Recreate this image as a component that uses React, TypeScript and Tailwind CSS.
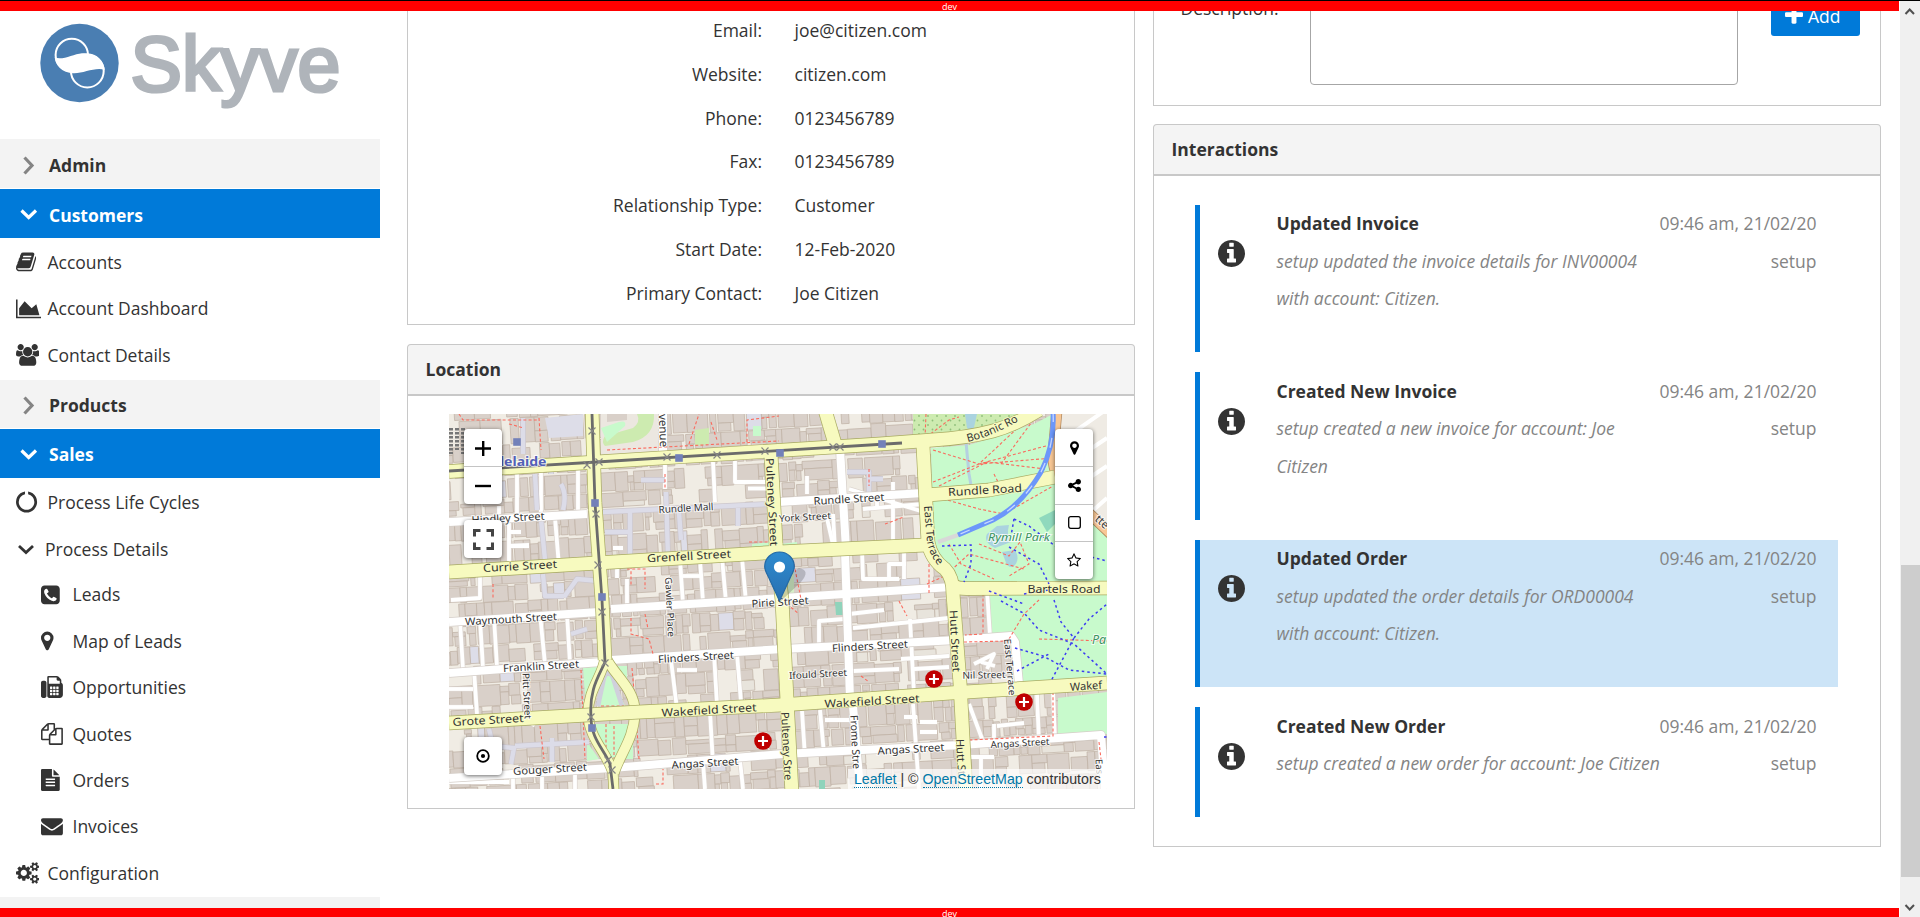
import React from "react";

type IconDef = { box: string; w: string; d: string };

const faxKeys = [928, 1184, 1440]
  .flatMap((x) =>
    [1536, 1280, 1024].map(
      (y) =>
        `M${x} ${y}v-128q0-14-9-23t-23-9h-128q-14 0-23 9t-9 23v128q0 14 9 23t23 9h128q14 0 23-9t9-23z`
    )
  )
  .join("");

const icons: Record<string, IconDef> = {
  book: {
    box: "64 0 1664 1792",
    w: "w-[20.3px]",
    d: "M1703 478q40 57 18 129l-275 906q-19 64-76.5 107.5t-122.5 43.5h-923q-77 0-148.5-53.5t-99.5-131.5q-24-67-2-127 0-4 3-27t4-37q1-8-3-21.5t-3-19.5q2-11 8-21t16.5-23.5 16.5-23.5q23-38 45-91.5t30-91.5q3-10 .5-30t-.5-28q3-11 17-28t17-23q21-36 42-92t25-90q1-9-2.5-32t.5-28q4-13 22-30.5t22-22.5q19-26 42.5-84.5t27.5-96.5q1-8-3-25.5t-2-26.5q2-8 9-18t18-23 17-21q8-12 16.5-30.5t15-35 16-36 19.5-32 26.5-23.5 36-11.5 47.5 5.5l-1 3q38-9 51-9h761q74 0 114 56t18 130l-274 906q-36 119-71.5 153.5t-128.5 34.5h-869q-27 0-38 15-11 16-1 43 24 70 144 70h923q29 0 56-15.5t35-41.5l300-987q7-22 5-57 38 15 59 43zm-1064 2q-4 13 2 22.5t20 9.5h608q13 0 25.5-9.5t16.5-22.5l21-64q4-13-2-22.5t-20-9.5h-608q-13 0-25.5 9.5t-16.5 22.5zm-83 256q-4 13 2 22.5t20 9.5h608q13 0 25.5-9.5t16.5-22.5l21-64q4-13-2-22.5t-20-9.5h-608q-13 0-25.5 9.5t-16.5 22.5z",
  },
  area: {
    box: "0 0 2048 1792",
    w: "w-[25px]",
    d: "M2048 1536v128h-2048v-1536h128v1408h1920zm-384-1024l256 896h-1664v-576l448-576 576 576z",
  },
  users: {
    box: "0 0 1920 1792",
    w: "w-[23.4px]",
    d: "M593 896q-162 5-265 128h-134q-82 0-138-40.5t-56-118.5q0-353 124-353 6 0 43.5 21t97.5 42.5 119 21.5q67 0 133-23-5 37-5 66 0 143 83 256zm1071 637q0 120-73 189.5t-194 69.5h-874q-121 0-194-69.5t-73-189.5q0-53 3.5-103.5t14-109 26.5-108.5 43-97.5 62-81 85.5-53.5 111.5-20q10 0 43 21.5t73 48 107 48 135 21.5 135-21.5 107-48 73-48 43-21.5q61 0 111.5 20t85.5 53.5 62 81 43 97.5 26.5 108.5 14 109 3.5 103.5zm-1024-1277q0 106-75 181t-181 75-181-75-75-181 75-181 181-75 181 75 75 181zm704 384q0 159-112.5 271.5t-271.5 112.5-271.5-112.5-112.5-271.5 112.5-271.5 271.5-112.5 271.5 112.5 112.5 271.5zm576 225q0 78-56 118.5t-138 40.5h-134q-103-123-265-128 83-113 83-256 0-29-5-66 66 23 133 23 59 0 119-21.5t97.5-42.5 43.5-21q124 0 124 353zm-128-609q0 106-75 181t-181 75-181-75-75-181 75-181 181-75 181 75 75 181z",
  },
  notch: {
    box: "32 0 1792 1792",
    w: "w-[21.9px]",
    d: "M1760 896q0 176-68.5 336t-184 275.5-275.5 184-336 68.5-336-68.5-275.5-184-184-275.5-68.5-336q0-213 97-398.5t265-305.5 374-151v228q-221 45-366.5 221t-145.5 406q0 130 51 248.5t136.5 204 204 136.5 248.5 51 248.5-51 204-136.5 136.5-204 51-248.5q0-230-145.5-406t-366.5-221v-228q206 31 374 151t265 305.5 97 398.5z",
  },
  phone: {
    box: "128 0 1536 1792",
    w: "w-[18.75px]",
    d: "M1408 1193q0-11-2-16t-18-16.5-40.5-25-47.5-26.5-45.5-25-28.5-15q-5-3-19-13t-25-15-21-5q-15 0-36.5 20.5t-39.5 45-38.5 45-33.5 20.5q-7 0-16.5-3.5t-15.5-6.5-17-9.5-14-8.5q-99-55-170-126.5t-127-170.5q-2-3-8.5-14t-9.5-17-6.5-15.5-3.5-16.5q0-13 20.5-33.5t45-38.5 45-39.5 20.5-36.5q0-10-5-21t-15-25-13-19q-3-6-15-28.5t-25-45.5-26.5-47.5-25-40.5-16.5-18-16-2q-48 0-101 22-46 21-80 94.5t-34 130.5q0 16 2.5 34t5 30.5 9 33 10 29.5 12.5 33 11 30q60 164 216.5 320.5t320.5 216.5q6 2 30 11t33 12.5 29.5 10 33 9 30.5 5 34 2.5q57 0 130.5-34t94.5-80q22-53 22-101zm256-777v960q0 119-84.5 203.5t-203.5 84.5h-960q-119 0-203.5-84.5t-84.5-203.5v-960q0-119 84.5-203.5t203.5-84.5h960q119 0 203.5 84.5t84.5 203.5z",
  },
  marker: {
    box: "384 0 1024 1792",
    w: "w-[12.5px]",
    d: "M1152 640q0-106-75-181t-181-75-181 75-75 181 75 181 181 75 181-75 75-181zm256 0q0 109-33 179l-364 774q-16 33-47.5 52t-67.5 19-67.5-19-46.5-52l-365-774q-33-70-33-179 0-212 150-362t362-150 362 150 150 362z",
  },
  fax: {
    box: "0 0 1792 1792",
    w: "w-[21.9px]",
    d:
      "M288 384q66 0 113 47t47 113v1088q0 66-47 113t-113 47h-128q-66 0-113-47t-47-113v-1088q0-66 47-113t113-47h128zm1376 163q58 34 93 93t35 128v768q0 106-75 181t-181 75h-864q-66 0-113-47t-47-113v-1536q0-40 28-68t68-28h672q40 0 88 20t76 48l152 152q28 28 48 76t20 88v163z" +
      faxKeys +
      "M1536 640v-256h-160q-40 0-68-28t-28-68v-160h-640v512z",
  },
  files: {
    box: "0 0 1792 1792",
    w: "w-[21.9px]",
    d: "M1696 384q40 0 68 28t28 68v1216q0 40-28 68t-68 28h-960q-40 0-68-28t-28-68v-288h-544q-40 0-68-28t-28-68v-672q0-40 20-88t48-76l408-408q28-28 76-48t88-20h416q40 0 68 28t28 68v328q68-40 128-40h416zm-544 213l-299 299h299v-299zm-640-384l-299 299h299v-299zm196 647l316-316v-416h-384v416q0 40-28 68t-68 28h-416v640h512v-256q0-40 20-88t48-76zm956 804v-1152h-384v416q0 40-28 68t-68 28h-416v640h896z",
  },
  file: {
    box: "128 0 1536 1792",
    w: "w-[18.75px]",
    d: "M1596 476q14 14 28 36h-472v-472q22 14 36 28zm-476 164h544v1056q0 40-28 68t-68 28h-1344q-40 0-68-28t-28-68v-1600q0-40 28-68t68-28h800v544q0 40 28 68t68 28zm160 736v-64q0-14-9-23t-23-9h-704q-14 0-23 9t-9 23v64q0 14 9 23t23 9h704q14 0 23-9t9-23zm0-256v-64q0-14-9-23t-23-9h-704q-14 0-23 9t-9 23v64q0 14 9 23t23 9h704q14 0 23-9t9-23zm0-256v-64q0-14-9-23t-23-9h-704q-14 0-23 9t-9 23v64q0 14 9 23t23 9h704q14 0 23-9t9-23z",
  },
  envelope: {
    box: "0 0 1792 1792",
    w: "w-[21.9px]",
    d: "M1792 710v794q0 66-47 113t-113 47h-1472q-66 0-113-47t-47-113v-794q44 49 101 87 362 246 497 345 57 42 92.5 65.5t94.5 48 110 24.5h2q51 0 110-24.5t94.5-48 92.5-65.5q170-123 498-345 57-39 100-87zm0-294q0 79-49 151t-122 123q-376 261-468 325-10 7-42.5 31t-54 38.5-52 32.5-57.5 27-50 9h-2q-23 0-50-9t-57.5-27-52-32.5-54-38.5-42.5-31q-91-64-262-182.5t-205-142.5q-62-42-117-115.5t-55-136.5q0-78 41.5-130t118.5-52h1472q65 0 112.5 47t47.5 113z",
  },
  cogs: {
    box: "0 0 1920 1792",
    w: "w-[23.4px]",
    d: "M896 896q0-106-75-181t-181-75-181 75-75 181 75 181 181 75 181-75 75-181zm768 512q0-52-38-90t-90-38-90 38-38 90q0 53 37.5 90.5t90.5 37.5 90.5-37.5 37.5-90.5zm0-1024q0-52-38-90t-90-38-90 38-38 90q0 53 37.5 90.5t90.5 37.5 90.5-37.5 37.5-90.5zm-384 421v185q0 10-7 19.5t-16 10.5l-155 24q-11 35-32 76 34 48 90 115 7 11 7 20 0 12-7 19-23 30-82.5 89.5t-78.5 59.5q-11 0-21-7l-115-90q-37 19-77 31-11 108-23 155-7 24-30 24h-186q-11 0-20-7.5t-10-17.5l-23-153q-34-10-75-31l-118 89q-7 7-20 7-11 0-21-8-144-133-144-160 0-9 7-19 10-14 41-53t47-61q-23-44-35-82l-152-24q-10-1-17-9.5t-7-19.5v-185q0-10 7-19.5t16-10.5l155-24q11-35 32-76-34-48-90-115-7-11-7-20 0-12 7-20 22-30 82-89t79-59q11 0 21 7l115 90q34-18 77-32 11-108 23-154 7-24 30-24h186q11 0 20 7.5t10 17.5l23 153q34 10 75 31l118-89q8-7 20-7 11 0 21 8 144 133 144 160 0 8-7 19-12 16-42 54t-45 60q23 48 34 82l152 23q10 2 17 10.5t7 19.5zm640 533v140q0 16-149 31-12 27-30 52 51 113 51 138 0 4-4 7-122 71-124 71-8 0-46-47t-52-68q-20 2-30 2t-30-2q-14 21-52 68t-46 47q-2 0-124-71-4-3-4-7 0-25 51-138-18-25-30-52-149-15-149-31v-140q0-16 149-31 13-29 30-52-51-113-51-138 0-4 4-7 4-2 35-20t59-34 30-16q8 0 46 46.5t52 67.5q20-2 30-2t30 2q51-71 92-112l6-2q4 0 124 70 4 3 4 7 0 25-51 138 17 23 30 52 149 15 149 31zm0-1024v140q0 16-149 31-12 27-30 52 51 113 51 138 0 4-4 7-122 71-124 71-8 0-46-47t-52-68q-20 2-30 2t-30-2q-14 21-52 68t-46 47q-2 0-124-71-4-3-4-7 0-25 51-138-18-25-30-52-149-15-149-31v-140q0-16 149-31 13-29 30-52-51-113-51-138 0-4 4-7 4-2 35-20t59-34 30-16q8 0 46 46.5t52 67.5q20-2 30-2t30 2q51-71 92-112l6-2q4 0 124 70 4 3 4 7 0 25-51 138 17 23 30 52 149 15 149 31z",
  },
  info: {
    box: "128 128 1536 1536",
    w: "w-[27px]",
    d: "M1152 1376v-160q0-14-9-23t-23-9h-96v-512q0-14-9-23t-23-9h-320q-14 0-23 9t-9 23v160q0 14 9 23t23 9h96v320h-96q-14 0-23 9t-9 23v160q0 14 9 23t23 9h448q14 0 23-9t9-23zm-128-896v-160q0-14-9-23t-23-9h-192q-14 0-23 9t-9 23v160q0 14 9 23t23 9h192q14 0 23-9t9-23zm640 416q0 209-103 385.5t-279.5 279.5-385.5 103-385.5-103-279.5-279.5-103-385.5 103-385.5 279.5-279.5 385.5-103 385.5 103 279.5 279.5 103 385.5z",
  },
  plus: {
    box: "192 0 1408 1792",
    w: "w-[18px]",
    d: "M1600 736v192q0 40-28 68t-68 28h-416v416q0 40-28 68t-68 28h-192q-40 0-68-28t-28-68v-416h-416q-40 0-68-28t-28-68v-192q0-40 28-68t68-28h416v-416q0-40 28-68t68-28h192q40 0 68 28t28 68v416h416q40 0 68 28t28 68z",
  },
  share: {
    box: "128 0 1536 1792",
    w: "w-[13px]",
    d: "M1344 1024q133 0 226.5 93.5t93.5 226.5-93.5 226.5-226.5 93.5-226.5-93.5-93.5-226.5q0-12 2-34l-360-180q-92 86-218 86-133 0-226.5-93.5t-93.5-226.5 93.5-226.5 226.5-93.5q126 0 218 86l360-180q-2-22-2-34 0-133 93.5-226.5t226.5-93.5 226.5 93.5 93.5 226.5-93.5 226.5-226.5 93.5q-126 0-218-86l-360 180q2 22 2 34t-2 34l360 180q92-86 218-86z",
  },
  star: {
    box: "64 0 1664 1792",
    w: "w-[14px]",
    d: "M1201 1004l306-297-422-62-189-382-189 382-422 62 306 297-73 421 378-199 377 199zm527-357q0 22-26 48l-363 354 86 500q1 7 1 20 0 50-41 50-19 0-40-12l-449-236-449 236q-22 12-40 12-21 0-31.5-14.5t-10.5-35.5q0-6 2-20l86-500-364-354q-25-27-25-48 0-37 56-46l502-73 225-455q19-41 49-41t49 41l225 455 502 73q56 9 56 46z",
  },
};

function Icon({ name, className = "" }: { name: string; className?: string }) {
  const i = icons[name];
  return (
    <svg viewBox={i.box} className={`${className || i.w} shrink-0`} fill="currentColor" fillRule="evenodd">
      <path d={i.d} />
    </svg>
  );
}

function Logo() {
  return (
    <svg width="380" height="128" viewBox="0 11 380 128" className="block shrink-0">
      <circle cx="79.5" cy="63" r="39.2" fill="#4a7eb2" />
      <circle cx="71.8" cy="55" r="16.2" fill="none" stroke="#fff" strokeWidth="2" />
      <circle cx="87.3" cy="71" r="16.4" fill="none" stroke="#fff" strokeWidth="2" />
      <path
        d="M54.7 57.3C62 61 73 54 82 53.2C95 52.5 104.5 60 104.7 70C95 66.500 82 74.500 72 73.200C62 72 55.500 66 54.700 57.300Z"
        fill="#fff"
      />
      <text
        x="130.500"
        y="91.200"
        fontFamily="Liberation Sans, sans-serif"
        fontSize="77"
        textLength="210"
        lengthAdjust="spacingAndGlyphs"
        fill="#afb4ba"
        stroke="#afb4ba"
        strokeWidth="3.2"
      >
        Skyve
      </text>
    </svg>
  );
}

function Section({ label, open = false, height = "h-[49px]" }: { label: string; open?: boolean; height?: string }) {
  return (
    <div
      className={`flex ${height} shrink-0 items-center overflow-hidden font-bold ${
        open ? "bg-[#007ad9] text-white" : "mb-px bg-[#f3f3f3] text-[#333333]"
      }`}
    >
      <svg width="49" height="49" viewBox="0 0 49 49" fill="none" strokeWidth="3.200">
        {open ? (
          <path d="M21.500 21.500L28.700 28.500L36 21.500" stroke="#fff" />
        ) : (
          <path d="M24.500 18.500L32 26.500L24.500 34.500" stroke="#848484" />
        )}
      </svg>
      <span className={open ? "pt-[2px]" : "pt-[3px]"}>{label}</span>
    </div>
  );
}

function Item({ icon, label, sub = false, tall = false }: { icon: string; label: string; sub?: boolean; tall?: boolean }) {
  return (
    <div
      className={`flex shrink-0 items-center ${tall ? "h-[46.67px]" : "h-[46.4px]"} ${sub ? "pb-[1px] pl-[41px]" : "pl-4"}`}
    >
      <span className="flex w-[31.5px]">
        <Icon name={icon} />
      </span>
      <span>{label}</span>
    </div>
  );
}

function Sidebar() {
  return (
    <nav className="flex w-[380px] shrink-0 flex-col overflow-hidden bg-white">
      <Logo />
      <Section label="Admin" />
      <Section label="Customers" open />
      <div className="flex shrink-0 flex-col pb-[1.500px] pt-[0.500px]">
        <Item tall icon="book" label="Accounts" />
        <Item tall icon="area" label="Account Dashboard" />
        <Item tall icon="users" label="Contact Details" />
      </div>
      <div className="flex shrink-0 flex-col">
        <Section label="Products" height="h-[48px]" />
        <Section label="Sales" open />
      </div>
      <div className="flex shrink-0 flex-col py-px">
        <Item icon="notch" label="Process Life Cycles" />
        <div className="flex h-[46.4px] shrink-0 items-center">
          <svg width="45" height="24" viewBox="0 0 45 24" fill="none" stroke="#333" strokeWidth="2.800">
            <path d="M19 9L26 15.500L33 9" />
          </svg>
          <span>Process Details</span>
        </div>
        <Item sub icon="phone" label="Leads" />
        <Item sub icon="marker" label="Map of Leads" />
        <Item sub icon="fax" label="Opportunities" />
        <Item sub icon="files" label="Quotes" />
        <Item sub icon="file" label="Orders" />
        <Item sub icon="envelope" label="Invoices" />
        <Item icon="cogs" label="Configuration" />
      </div>
      <div className="h-[20px] shrink-0 bg-[#f3f3f3]" />
    </nav>
  );
}

/* ---------- Map ---------- */

function seeded(seed: number) {
  let s = seed;
  return () => {
    s = (s * 1664525 + 1013904223) % 4294967296;
    return s / 4294967296;
  };
}

type Box = { x: number; y: number; w: number; h: number; f: string };

const buildings: Box[] = (() => {
  const r = seeded(77);
  const out: Box[] = [];
  for (let y = -10; y < 430; ) {
    const rowH = 15 + r() * 11;
    for (let x = -30; x < 690; ) {
      const w = 6 + r() * r() * 26;
      const roll = r();
      const top = r() < 0.3 ? r() * 5 : 0;
      if (roll > 0.1) {
        if (roll < 0.45) {
          const cut = rowH * (0.35 + r() * 0.3);
          out.push({ x, y: y + top, w, h: cut - top, f: "#d9d0c9" });
          out.push({ x: x + (r() < 0.4 ? 2 : 0), y: y + cut, w: w - r() * 3, h: rowH - cut - 1, f: r() < 0.1 ? "#e8e4dc" : "#d9d0c9" });
        } else {
          out.push({ x, y: y + top, w, h: rowH - top - r() * 2, f: r() < 0.04 ? "#dddde8" : "#d9d0c9" });
        }
      }
      x += w + (r() < 0.25 ? 2 : 0);
    }
    y += rowH + (r() < 0.3 ? 2 : 0.3);
  }
  return out;
})();

const lanes = [
  "M68 58V100", "M92 57V102", "M129 55V98", "M264 48L266 88", "M286 47V68H318", "M299 74.500H320", "M216 50V75",
  "M50 92V104", "M60 106V147M60 132H80M60 118H72", "M106 104L110 152", "M31 160V184L2 186", "M59 132L80 131",
  "M231 146L234 190", "M251 146L254 188", "M273 144L277 188", "M293 144L297 188", "M168 145V164M164 134H174", "M234 162H251",
  "M178 165V194", "M11 207L14 255", "M31 205L34 254", "M45 204L48 252", "M91 200L96 250", "M118 200L121 250",
  "M265 240L268 290", "M288 240L292 288", "M222 246L228 295", "M228 256H248", "M25 256L28 300", "M0 275H24", "M0 293H24",
  "M83 312L87 306", "M261 298L264 350", "M291 346L294 375", "M254 348L256 375", "M64 360V375", "M93 360V375", "M126 358V375",
  "M0 368H60", "M377 100L385 135", "M384 100L386 135", "M413 136L414 165H450M440 165V150H457M455 132V165",
  "M444 68V132M414 95L475 90M400 75L475 98M428 80V95", "M358 62V80", "M371 296L375 340M376 306H402", "M353 297L356 343",
  "M461 205L465 280", "M464 290L470 375", "M400 200L435 196M404 214L500 204", "M370 235V207L395 205", "M465 255L500 253",
  "M404 257L450 255M452 245L500 242", "M471 308H488M471 318H488M455 303H468", "M588 280L590 328M604 278L606 325", "M651 322L656 375",
  "M538 176L541 222L560 221", "M525 250L545 240L538 255M532 248L546 252", "M516 343H545M532 345V375", "M520 290L535 330M545 310V325M548 312L575 309",
];

const minorRoads = [
  "M0 108L138 100", "M330 88L474 79", "M0 208L150 198", "M162 195L334 184L502 173", "M0 259L153 248",
  "M162 246L334 235L508 226L562 222L566 228L570 270", "M0 364L163 354L334 340L512 331L652 321L656 375",
  "M214 0V44", "M391 35L397 135", "M396 138L401 285", "M404 292L411 375",
];

const lavender = [
  "M154 98L320 90", "M86 60L88 96", "M92 105L97 156", "M217 78L219 142", "M181 96V142M156 118H180", "M230 98L232 126",
  "M94 160L96 182H115M115 183L128 165L150 167", "M112 70Q118 80 114 96M102 50V60M74 4V40", "M192 66H216", "M289 94V112",
  "M398 58H420V78M420 65H434", "M40 315L44 332L65 334L62 350M66 332L140 328M103 324V348", "M122 220L138 215",
];

const primary = [
  "M0 57.500L148 48L431 30L484 26Q518 24 544 17Q566 11 590 -4",
  "M143 -4L146 89L153 186L156 246", "M376 -4L386 30",
  "M0 158L148 149L331 138L476 131", "M0 309L138 301L191 298L331 291L501 279L658 269",
  "M322 40L327 130L333 186L338 286L343 380",
  "M474 32L479 128Q482 145 496 155Q504 163 504 180L511 269L517 380",
  "M504 172Q510 175 520 174.500L658 174", "M478 81L540 76L606 63",
];

const squareRing = [
  "M156 244C154 262 139 275 139 300C140 325 158 338 164 359L165 380",
  "M157 244C166 262 186 275 186 298C185 325 172 338 165 359",
];

const redPaths = [
  "M10 0L14 6H90M60 10L75 14M90 4L92 36", "M158 36L330 27M240 30L250 0M262 8L268 26M298 28V6L330 2", "M216 60V75",
  "M477 0L476 24L500 6L510 3", "M484 36L530 50L604 30M484 68L530 50L575 8M490 72L538 48L596 55M530 50L604 44M545 60L552 74M552 50L585 5",
  "M484 82L530 95L555 100L604 72", "M498 160L520 140L575 155M530 130L560 142L571 128L580 150L560 162M500 130L512 150L545 165",
  "M300 128H322M302 136L318 142", "M178 155H196V175M182 152V172", "M182 204V220L200 225L204 240M196 200L199 215", "M183 254L187 300",
  "M132 256L136 345", "M152 292H175", "M188 316L190 345", "M91 312L95 345", "M157 310V345M165 312V345", "M450 187L458 202",
  "M515 228L560 227M534 174V220L516 221", "M604 278V322L520 326M650 328L652 345", "M560 225L575 200L590 186M590 225L658 227",
  "M420 55V72M436 110L455 103", "M338 190L350 200M345 150L352 185", "M478 170L500 160M480 150V180", "M412 262L420 268",
  "M44 170V184", "M207 370H214V355",
];

const bluePaths = [
  "M493 132L522 131V150L515 168M565 105L580 112L610 135L658 147M565 105L562 122M560 133L590 150L600 170",
  "M552 187L576 200L590 216L625 230L658 260", "M605 186L612 208L625 224L602 267", "M566 234L594 242L620 256L658 260",
  "M568 257L600 240M625 224L640 205L658 190", "M540 177L575 190M575 180L600 176", "M655 323H658",
];

function Label({
  x, y, w, t, r = -3.300, s = 11, fill = "#333", italic = false, bold = false, halo = "#fff",
}: {
  x: number; y: number; w?: number; t: string; r?: number; s?: number; fill?: string; italic?: boolean; bold?: boolean; halo?: string;
}) {
  return (
    <text
      x={x}
      y={y}
      transform={`rotate(${r} ${x} ${y})`}
      dy="0.36em"
      textAnchor={w ? "middle" : "start"}
      textLength={w}
      lengthAdjust="spacingAndGlyphs"
      fontSize={s}
      fontStyle={italic ? "italic" : "normal"}
      fontWeight={bold ? 700 : 400}
      fill={fill}
      stroke={halo}
      strokeOpacity="0.750"
      strokeWidth="2"
      paintOrder="stroke"
    >
      {t}
    </text>
  );
}

const stops = [[68, 28], [230, 44], [331, 39], [146, 89], [153, 183], [433, 30], [143, 314]];
const crossings = [
  [143, 17], [138, 51], [150, 48], [218, 43], [268, 41], [316, 37], [147, 100], [149, 151], [384, 33], [391, 33],
  [153, 198], [156, 249], [142, 303], [159, 346], [163, 356],
];
const hospitals = [[314, 327], [485, 265], [575, 288]];

function Roads({ paths, color, width, casing }: { paths: string[]; color: string; width: number; casing?: string }) {
  return (
    <g fill="none" strokeLinejoin="round">
      {casing && paths.map((d) => <path key={d} d={d} stroke={casing} strokeWidth={width + 1.400} />)}
      {paths.map((d) => (
        <path key={d} d={d} stroke={color} strokeWidth={width} />
      ))}
    </g>
  );
}

function StreetMap() {
  const Y = "#f7fabf";
  return (
    <svg width="658" height="375" viewBox="0 0 658 375" className="block" fontFamily="Noto Sans, sans-serif">
      <defs>
        <pattern id="dots" width="9" height="9" patternUnits="userSpaceOnUse">
          <rect width="9" height="9" fill="#cdebb0" />
          <circle cx="2" cy="2" r="0.900" fill="#8fbf7a" />
          <circle cx="6.500" cy="6.500" r="0.900" fill="#8fbf7a" />
        </pattern>
        <linearGradient id="pin" x1="0" y1="0" x2="0" y2="1">
          <stop offset="0" stopColor="#2e8bcf" />
          <stop offset="1" stopColor="#2a6fb0" />
        </linearGradient>
        <path id="botanic" d="M519 28Q550 21 598 -10" />
        <path id="eastTerrace" d="M475 92L478 128Q481 146 500 163" />
      </defs>
      <rect width="658" height="375" fill="#f0ece4" />
      <g transform="rotate(-3.300)" stroke="#bfb1a5" strokeWidth="0.700">
        {buildings.map((b, i) => (
          <rect key={i} x={b.x} y={b.y} width={Math.max(b.w, 2)} height={Math.max(b.h, 2)} fill={b.f} />
        ))}
      </g>

      {/* university grounds and railway yard */}
      <path d="M96 4L134 0V22L100 24Z" fill="#dddde8" />
      <g stroke="#777" strokeWidth="4" strokeDasharray="2.500 1.500">
        <path d="M2 14V40M8 14V36M14 14V40" />
      </g>
      <path d="M152 0H214V38L152 42Z" fill="#ece7e0" />
      <path d="M188 0H205Q206 22 184 28L156 32Q152 28 156 22L184 14Q192 8 188 0Z" fill="#cdebb0" />
      <path d="M152 14L170 8Q178 6 176 12L158 28Z" fill="#c8facc" />
      <path d="M158 0H178V6L158 8Z" fill="#d9d0c9" />
      <path d="M246 16L260 14V30L246 32Z" fill="#cdebb0" />
      <path d="M304 12H312V22H304Z" fill="#c8facc" />

      {/* parklands */}
      <path d="M464 0H592L545 20L518 23L464 24Z" fill="url(#dots)" />
      <path d="M516 0H528L524 18L518 14Z" fill="#aad3df" />
      <path d="M482 34L520 31L585 10L604 0V62L660 120V268L570 270L565 225L540 221L536 178L512 174L500 156L484 140Z" fill="#c8facc" />
      <path d="M610 0H658V118L604 62Z" fill="#efebe4" />
      <path d="M608 30L658 -5M616 52L658 24M625 74L658 52M640 100L658 84" stroke="#fff" strokeWidth="4" />
      <path d="M609 284L658 278V320L609 323Z" fill="#c8facc" />
      <path d="M548 112L560 111Q557 122 562 128L546 134Q534 128 538 120Z" fill="#aad3df" />
      <path d="M553 138L566 136Q572 146 564 153Q558 154 556 146Z" fill="#aad3df" />
      <path d="M517 28L520 60L524 82" fill="none" stroke="#b5d0e0" strokeWidth="3" />
      <path d="M590 104L606 96V110L598 118Z" fill="#8fd9bd" />
      <path d="M303 130L322 128V144L303 146Z" fill="#c8facc" />
      <path d="M331 130L348 128V142L331 144Z" fill="#c8facc" />
      <path d="M322 150L345 148V182L330 184Z" fill="#d5efc8" />
      <path d="M386 188H394V201H387Z" fill="#8fd3bb" />
      <path d="M370 366H376V375H370Z" fill="#8fd3bb" />
      <path d="M134 254L150 252L136 282Z M166 252L178 252V268Z M148 292L156 262H163L176 292Z M144 310H182L170 347L160 347Z M138 328L150 345L138 347Z M184 328V345H174Z" fill="#c8facc" />

      <Roads paths={lanes} color="#fff" width={3.800} casing="#ddd6d0" />
      <Roads paths={lavender} color="#dcdce8" width={4.400} casing="#cdc7cc" />
      <Roads paths={minorRoads} color="#fff" width={8} casing="#d5cec8" />

      <path d="M149 292L155 264Q159 254 164 264L173 292" fill="none" stroke="#d0d0dc" strokeWidth="4.500" />
      <g fill="none" stroke="#fa6b5e" strokeWidth="1.100" strokeDasharray="3 2.200">
        {redPaths.map((d) => (
          <path key={d} d={d} />
        ))}
      </g>
      <path d="M608 -4L604 40Q603 62 622 82L664 122" fill="none" stroke="#b08a60" strokeWidth="11" />
      <path d="M608 -4L604 40Q603 62 622 82L664 122" fill="none" stroke="#f8c795" strokeWidth="9.500" />
      <Roads paths={squareRing} color={Y} width={9.500} casing="#a9ab63" />
      <Roads paths={primary} color={Y} width={13} casing="#a9ab63" />
      <g fill="none" stroke="#3b3bf2" strokeWidth="1.500" strokeDasharray="2.500 3">
        {bluePaths.map((d) => (
          <path key={d} d={d} />
        ))}
      </g>

      {/* guided busway */}
      <path d="M509 121L489 128" stroke="#d8d8d8" strokeWidth="4" />
      <path d="M604 -2Q606 30 592 58Q572 92 544 106L509 121" fill="none" stroke="#6c97fa" strokeWidth="5" />
      <path d="M604 -2Q606 30 592 58Q572 92 544 106L509 121" fill="none" stroke="#c9d8ff" strokeWidth="1.300" strokeDasharray="10 16" />

      {/* tram line */}
      <g fill="none" stroke="#6b6b6b" strokeWidth="2.800">
        <path d="M0 57L148 48L453 29" />
        <path d="M143 0L146 89L153 186L156 248C150 262 140 275 142 303C142 325 155 335 161 350L164 375" />
      </g>
      {crossings.map(([x, y]) => (
        <path key={`${x}-${y}`} d={`M${x - 3.500} ${y - 3.500}l7 7m0-7l-7 7`} stroke="#858585" strokeWidth="1.200" />
      ))}
      {stops.map(([x, y]) => (
        <rect key={`${x}-${y}`} x={x - 3.800} y={y - 3.800} width="7.600" height="7.600" fill="#7381b9" />
      ))}

      <Label x={67} y={47} w={61} t="Adelaide" s={12.500} r={0} bold fill="#5461b8" />
      <Label x={59} y={104} w={73} t="Hindley Street" s={10.500} />
      <Label x={237} y={94} w={55} t="Rundle Mall" s={10} />
      <Label x={71} y={152} w={74} t="Currie Street" halo={Y} />
      <Label x={240} y={142} w={84} t="Grenfell Street" halo={Y} />
      <Label x={214} y={0} t="venue" r={88} s={11.500} />
      <Label x={323} y={88} w={88} t="Pulteney Street" r={87} halo={Y} />
      <Label x={400} y={85} w={71} t="Rundle Street" s={10.500} />
      <Label x={356} y={103} w={52} t="York Street" s={9.500} />
      <Label x={536} y={76} w={74} t="Rundle Road" halo={Y} />
      <Label x={570} y={123} w={62} t="Rymill Park" r={0} s={10.500} italic fill="#3b9460" />
      <Label x={615} y={175} w={73} t="Bartels Road" r={0} halo={Y} />
      <Label x={648} y={103} t="tte" r={42} s={11} />
      <Label x={221} y={193} w={60} t="Gawler Place" r={87} s={9.500} />
      <Label x={331} y={188} w={57} t="Pirie Street" s={10.500} />
      <Label x={62} y={205} w={92} t="Waymouth Street" s={10.500} />
      <Label x={92} y={252} w={76} t="Franklin Street" s={10.500} />
      <Label x={247} y={243} w={76} t="Flinders Street" s={10.500} />
      <Label x={78} y={282} w={46} t="Pitt Street" r={87} s={9.500} />
      <Label x={39} y={306} w={71} t="Grote Street" halo={Y} />
      <Label x={260} y={296} w={95} t="Wakefield Street" halo={Y} />
      <Label x={101} y={355} w={74} t="Gouger Street" s={10.500} />
      <Label x={256} y={349} w={67} t="Angas Street" s={10.500} />
      <Label x={421} y={232} w={76} t="Flinders Street" s={10.500} />
      <Label x={369} y={260} w={58} t="Ifould Street" s={9.500} />
      <Label x={535} y={261} w={43} t="Nil Street" r={-1} s={9.500} />
      <Label x={506} y={227} w={62} t="Hutt Street" r={87} halo={Y} />
      <Label x={561} y={253} w={57} t="East Terrace" r={85} s={9.500} />
      <Label x={423} y={287} w={95} t="Wakefield Street" halo={Y} />
      <Label x={621} y={273} t="Wakef" r={-4} halo={Y} />
      <Label x={405} y={301} t="Frome Stre" r={87} s={10.500} />
      <Label x={336} y={298} t="Pulteney Stre" r={87} halo={Y} />
      <Label x={511} y={325} t="Hutt St" r={87} halo={Y} />
      <Label x={462} y={335} w={67} t="Angas Street" s={10.500} />
      <Label x={571} y={329} w={59} t="Angas Street" s={9.500} />
      <Label x={650} y={345} t="Eas" r={87} s={9.500} />
      <Label x={643} y={225} t="Pa" r={0} s={12.500} italic fill="#3b9460" />
      <text fontSize="11" fill="#333" stroke={Y} strokeWidth="2" paintOrder="stroke">
        <textPath href="#botanic">Botanic Ro</textPath>
      </text>
      <text fontSize="11" fill="#333" stroke={Y} strokeWidth="2" paintOrder="stroke">
        <textPath href="#eastTerrace">East Terrace</textPath>
      </text>

      {hospitals.map(([x, y]) => (
        <g key={x}>
          <circle cx={x} cy={y} r="8.800" fill="#bf0000" />
          <path d={`M${x - 5} ${y}h10M${x} ${y - 5}v10`} stroke="#fff" strokeWidth="2.200" />
        </g>
      ))}

      <path d="M332 187L352 168Q362 156 350 154L336 162Z" fill="#000" opacity="0.180" />
      <path
        d="M330.500 187L319 162Q315.700 156 315.700 152.500A14.800 14.500 0 0 1 345.300 152.500Q345.300 156 342 162Z"
        fill="url(#pin)"
        stroke="#2469a5"
        strokeWidth="1.200"
      />
      <circle cx="330.500" cy="153" r="5.600" fill="#fff" />
    </svg>
  );
}

function MapButton({ children, last = false }: { children: React.ReactNode; last?: boolean }) {
  return (
    <div className={`flex flex-1 items-center justify-center ${last ? "" : "border-b border-[#c4c4c4]"}`}>{children}</div>
  );
}

const controlBox =
  "absolute flex w-[38px] flex-col rounded-[4px] bg-white text-black shadow-[0_1px_4px_rgba(0,0,0,0.6)]";

function MapPanel() {
  return (
    <div className="relative h-[375px] w-[658px] overflow-hidden">
      <StreetMap />
      <div className={`${controlBox} left-[15px] top-[15px] h-[75px]`}>
        <MapButton>
          <svg width="16" height="16" viewBox="0 0 16 16" stroke="#000" strokeWidth="2.400">
            <path d="M0 8.500H16M8.200 1V16" />
          </svg>
        </MapButton>
        <MapButton last>
          <svg width="16" height="16" viewBox="0 0 16 16" stroke="#000" strokeWidth="2.400">
            <path d="M0 8H16" />
          </svg>
        </MapButton>
      </div>
      <div className={`${controlBox} left-[15px] top-[106px] h-[38px]`}>
        <MapButton last>
          <svg width="21" height="21" viewBox="0 0 21 21" fill="none" stroke="#444" strokeWidth="3">
            <path d="M1.500 7.500V1.500H7.500M13.500 1.500H19.500V7.500M19.500 13.500V19.500H13.500M7.500 19.500H1.500V13.500" />
          </svg>
        </MapButton>
      </div>
      <div className={`${controlBox} left-[15px] top-[323px] h-[38px]`}>
        <MapButton last>
          <svg width="14" height="14" viewBox="0 0 14 14" fill="none" stroke="#000" strokeWidth="1.800">
            <circle cx="7" cy="7" r="5.800" />
            <circle cx="7" cy="7" r="2.100" fill="#000" stroke="none" />
          </svg>
        </MapButton>
      </div>
      <div className={`${controlBox} left-[606px] top-[15px] h-[150px]`}>
        <MapButton>
          <Icon name="marker" className="w-[9px]" />
        </MapButton>
        <MapButton>
          <Icon name="share" className="w-[13px]" />
        </MapButton>
        <MapButton>
          <svg width="13" height="13" viewBox="0 0 13 13" fill="none" stroke="#000" strokeWidth="1.300">
            <rect x="0.700" y="0.700" width="11.600" height="11.600" rx="2" />
          </svg>
        </MapButton>
        <MapButton last>
          <Icon name="star" className="w-[14px]" />
        </MapButton>
      </div>
      <div className="absolute bottom-0 right-0 flex h-[20px] items-center bg-white/70 px-[6.250px] font-['Liberation_Sans',sans-serif] text-[14.200px] leading-[20px] text-[#333]">
        <span className="whitespace-pre">
          <span className="border-b border-dotted border-[#0078a8] text-[#0078a8]">Leaflet</span> | ©{" "}
          <span className="border-b border-dotted border-[#0078a8] text-[#0078a8]">OpenStreetMap</span> contributors
        </span>
      </div>
    </div>
  );
}

/* ---------- Main panels ---------- */

const details = [
  ["Email:", "joe@citizen.com"],
  ["Website:", "citizen.com"],
  ["Phone:", "0123456789"],
  ["Fax:", "0123456789"],
  ["Relationship Type:", "Customer"],
  ["Start Date:", "12-Feb-2020"],
  ["Primary Contact:", "Joe Citizen"],
];

function CardHeader({ title }: { title: string }) {
  return (
    <div className="flex h-[52px] shrink-0 items-center rounded-t-[4px] border border-b-2 border-[#c8c8c8] bg-[#f4f4f4] pb-[2px] pl-[17.500px] font-bold">
      {title}
    </div>
  );
}

const interactions = [
  { title: "Updated Invoice", text: "setup updated the invoice details for INV00004 with account: Citizen.", h: "h-[147.500px]" },
  { title: "Created New Invoice", text: "setup created a new invoice for account: Joe Citizen", h: "h-[147.500px]" },
  { title: "Updated Order", text: "setup updated the order details for ORD00004 with account: Citizen.", h: "h-[147.500px]", active: true },
  { title: "Created New Order", text: "setup created a new order for account: Joe Citizen", h: "h-[110px]" },
];

function Interaction({ title, text, h, active }: { title: string; text: string; h: string; active?: boolean }) {
  return (
    <div className={`flex ${h} shrink-0 border-l-[5px] border-[#007ad9] leading-[37.500px] ${active ? "bg-[#cce4f7]" : ""}`}>
      <div className="w-[76.500px] shrink-0 pl-[18.200px] pt-[35.500px]">
        <Icon name="info" />
      </div>
      <div className="w-[386px] shrink-0 pt-[0.400px]">
        <div className="font-bold">{title}</div>
        <div className="italic text-[#848484]">{text}</div>
      </div>
      <div className="-ml-[12px] flex-1 whitespace-nowrap pr-[21.500px] pt-[0.400px] text-right text-[#848484]">
        <div>09:46 am, 21/02/20</div>
        <div>setup</div>
      </div>
    </div>
  );
}

function DevBar({ className }: { className: string }) {
  return (
    <div
      className={`flex w-[1899px] shrink-0 items-center justify-center overflow-hidden bg-[#ff0000] text-[9px] leading-none text-white ${className}`}
    >
      dev
    </div>
  );
}

export default function App() {
  return (
    <div className="flex h-[917px] w-[1920px] flex-col overflow-hidden bg-white font-['Open_Sans',sans-serif] text-[17.500px] leading-[24px] text-[#333333]">
      <div className="h-px shrink-0 bg-black" />
      <div className="flex min-h-0 flex-1">
        <div className="flex w-[1900px] flex-col">
          <DevBar className="h-[10px] pt-px" />
          <div className="flex min-h-0 flex-1 overflow-hidden">
            <Sidebar />
            <main className="flex flex-1 gap-[18px] overflow-hidden pl-[27px]">
              <div className="flex w-[728px] flex-col gap-[19px]">
                <section className="h-[314px] shrink-0 overflow-hidden border border-t-0 border-[#c8c8c8]">
                  <div className="-mt-[2.700px] grid grid-cols-[354px_1fr] gap-x-[32.500px]">
                    {details.map(([k, v]) => (
                      <React.Fragment key={k}>
                        <div className="flex h-[43.750px] items-center justify-end">{k}</div>
                        <div className="flex h-[43.750px] items-center">{v}</div>
                      </React.Fragment>
                    ))}
                  </div>
                </section>
                <section>
                  <CardHeader title="Location" />
                  <div className="border border-t-0 border-[#c8c8c8] pb-[19px] pl-[41px] pt-[18px]">
                    <MapPanel />
                  </div>
                </section>
              </div>
              <div className="flex w-[728px] flex-col gap-[18px]">
                <section className="flex h-[95px] shrink-0 items-start overflow-hidden border border-t-0 border-[#c8c8c8] pl-[26.500px]">
                  <div className="-mt-[15px] w-[129.500px]">Description:</div>
                  <div className="-mt-[20px] h-[94px] w-[428px] rounded-[4px] border border-[#a6a6a6]" />
                  <div className="-mt-[16px] ml-[33px] flex h-[41px] w-[89px] items-center rounded-[3px] bg-[#007ad9] pl-[14px] text-white">
                    <Icon name="plus" />
                    <span className="ml-[5px]">Add</span>
                  </div>
                </section>
                <section>
                  <CardHeader title="Interactions" />
                  <div className="flex h-[671px] flex-col gap-[20px] border border-t-0 border-[#c8c8c8] pl-[41px] pr-[42px] pt-[28.700px]">
                    {interactions.map((i) => (
                      <Interaction key={i.title} {...i} />
                    ))}
                  </div>
                </section>
              </div>
            </main>
          </div>
          <DevBar className="h-[9px] pt-[2px]" />
        </div>
        <div className="flex w-[20px] flex-col items-center bg-[#f0f0f0]">
          <svg width="20" height="20" viewBox="0 0 20 20" fill="none" stroke="#505050" strokeWidth="2">
            <path d="M5.500 13L9.700 8.500L14 13" />
          </svg>
          <div className="mt-[544px] h-[312px] w-[19px] bg-[#cdcdcd]" />
          <div className="flex-1" />
          <svg width="20" height="20" viewBox="0 0 20 20" fill="none" stroke="#505050" strokeWidth="2">
            <path d="M5.500 8L9.700 12.500L14 8" />
          </svg>
        </div>
      </div>
    </div>
  );
}
